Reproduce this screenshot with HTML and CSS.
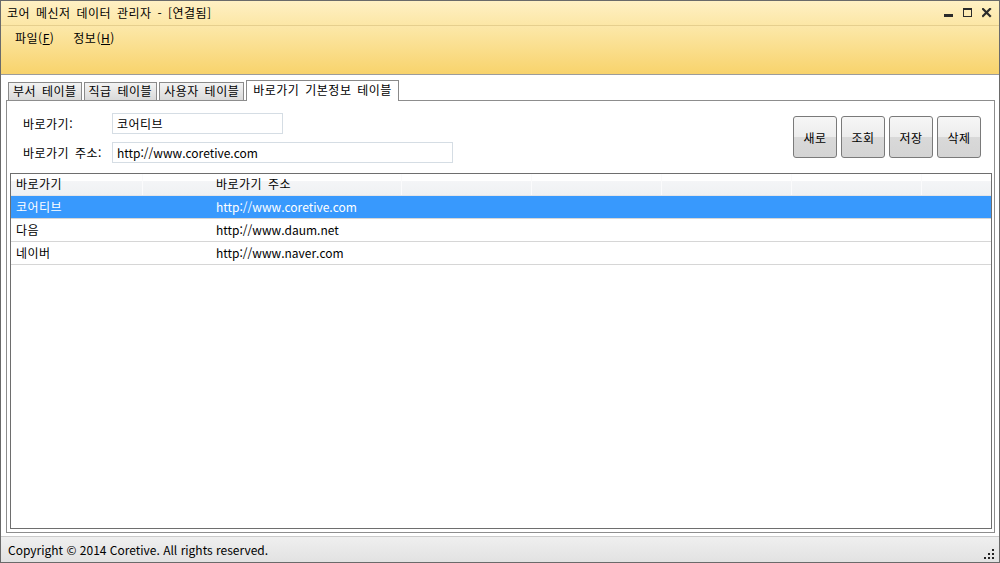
FILE: index.html
```html
<!DOCTYPE html>
<html lang="ko">
<head>
<meta charset="utf-8">
<title>코어 메신저 데이터 관리자</title>
<link rel="stylesheet" href="styles.css">
</head>
<body>
<div class="window">
  <header class="titlebar">
    <span class="title">코어 메신저 데이터 관리자 - [연결됨]</span>
    <div class="controls">
      <svg class="ctl" width="10" height="10" viewBox="0 0 10 10"><rect x="0" y="6" width="9" height="3" fill="#2b2b2b"/></svg>
      <svg class="ctl" width="10" height="10" viewBox="0 0 10 10"><rect x="0.5" y="0.5" width="8" height="8" fill="none" stroke="#2b2b2b"/><rect x="0" y="0" width="9" height="2" fill="#2b2b2b"/></svg>
      <svg class="ctl" width="10" height="10" viewBox="0 0 10 10"><path d="M1 1 L8 8 M8 1 L1 8" stroke="#2b2b2b" stroke-width="2.2" stroke-linecap="square"/></svg>
    </div>
  </header>
  <nav class="menubar">
    <span class="menu">파일(<u>F</u>)</span>
    <span class="menu">정보(<u>H</u>)</span>
  </nav>
  <main class="content">
    <div class="tabs">
      <div class="tab">부서 테이블</div>
      <div class="tab">직급 테이블</div>
      <div class="tab">사용자 테이블</div>
      <div class="tab active">바로가기 기본정보 테이블</div>
    </div>
    <section class="panel">
      <div class="form">
        <div class="fields">
          <div class="field">
            <span class="label">바로가기:</span>
            <div class="input short">코어티브</div>
          </div>
          <div class="field">
            <span class="label">바로가기 주소:</span>
            <div class="input long latin">http://www.coretive.com</div>
          </div>
        </div>
        <div class="buttons">
          <button class="btn">새로</button>
          <button class="btn">조회</button>
          <button class="btn">저장</button>
          <button class="btn">삭제</button>
        </div>
      </div>
      <div class="list">
        <div class="list-head">
          <div class="hcell c1">바로가기</div>
          <div class="hcell c2">바로가기 주소</div>
          <div class="hcell c3"></div>
          <div class="hcell c3"></div>
          <div class="hcell c3"></div>
          <div class="hcell c3"></div>
          <div class="hcell last"></div>
        </div>
        <div class="row selected"><div class="cell name">코어티브</div><div class="cell url latin">http://www.coretive.com</div></div>
        <div class="row"><div class="cell name">다음</div><div class="cell url latin">http://www.daum.net</div></div>
        <div class="row"><div class="cell name">네이버</div><div class="cell url latin">http://www.naver.com</div></div>
      </div>
    </section>
  </main>
  <footer class="status">
    <span class="copy latin">Copyright © 2014 Coretive. All rights reserved.</span>
    <svg class="grip" width="12" height="12" viewBox="0 0 12 12">
      <rect x="9" y="1" width="2" height="2" fill="#222"/>
      <rect x="5" y="5" width="2" height="2" fill="#222"/>
      <rect x="9" y="5" width="2" height="2" fill="#222"/>
      <rect x="1" y="9" width="2" height="2" fill="#222"/>
      <rect x="5" y="9" width="2" height="2" fill="#222"/>
      <rect x="9" y="9" width="2" height="2" fill="#222"/>
    </svg>
  </footer>
</div>
</body>
</html>
```
FILE: styles.css
```css
* { box-sizing: border-box; }
html, body { margin: 0; padding: 0; }
body {
  width: 1000px;
  height: 563px;
  overflow: hidden;
  font-family: "Noto Sans CJK KR", "Noto Sans", sans-serif;
  font-size: 12px;
  letter-spacing: 0.5px;
  word-spacing: 2px;
  color: #000;
  background: #fff;
}
.latin { letter-spacing: 0; word-spacing: 0; }
.window {
  width: 1000px;
  height: 563px;
  border: 1px solid #6a6a6a;
  display: flex;
  flex-direction: column;
  background: #fff;
}
.titlebar {
  height: 25px;
  flex: none;
  display: flex;
  align-items: center;
  justify-content: space-between;
  padding: 0 6px 1px 6px;
  border-bottom: 1px solid #e6cf8e;
  background: linear-gradient(#fff0c4, #fce7a6);
}
.title { line-height: 16px; }
.controls {
  display: flex;
  gap: 9px;
  align-items: center;
  padding-right: 1px;
}
.ctl { display: block; }
.menubar {
  height: 49px;
  flex: none;
  display: flex;
  align-items: flex-start;
  gap: 19px;
  padding: 4px 0 0 14px;
  border-bottom: 1px solid #9c9c9c;
  background: linear-gradient(#fce8a9, #f8d36c);
}
.menu { line-height: 16px; }
.menu u { text-underline-offset: 1px; }
.content {
  flex: 1;
  display: flex;
  flex-direction: column;
  padding: 5px 4px 3px 5px;
  background: #fff;
}
.tabs {
  height: 20px;
  flex: none;
  display: flex;
  align-items: flex-end;
  gap: 2px;
  padding-left: 2px;
}
.tab {
  height: 18px;
  padding: 0 4px;
  border: 1px solid #8a8a8a;
  border-bottom: none;
  background: linear-gradient(#f3f3f3, #d9d9d9);
  line-height: 16px;
  white-space: nowrap;
}
.tab.active {
  height: 21px;
  margin-bottom: -1px;
  padding: 0 6px;
  background: #fff;
  position: relative;
  z-index: 1;
  line-height: 17px;
}
.panel {
  flex: 1;
  display: flex;
  flex-direction: column;
  border: 1px solid #8d8d8d;
  padding: 0 2px 3px 3px;
  background: #fff;
}
.form {
  height: 72px;
  flex: none;
  display: flex;
  justify-content: space-between;
  align-items: flex-start;
}
.fields {
  display: flex;
  flex-direction: column;
  gap: 8px;
  padding: 12px 0 0 13px;
}
.field { display: flex; align-items: center; }
.label { width: 89px; line-height: 16px; }
.input {
  height: 21px;
  border: 1px solid #d5dde4;
  padding: 0 4px;
  line-height: 19px;
  background: #fff;
}
.input.short { width: 171px; }
.input.long { width: 341px; }
.buttons {
  display: flex;
  gap: 4px;
  padding-top: 15px;
  margin-right: 11px;
}
.btn {
  width: 44px;
  height: 42px;
  padding: 0;
  border: 1px solid #7a7a7a;
  border-radius: 3px;
  background: linear-gradient(#f6f6f6 0%, #ececec 50%, #d9d9d9 51%, #d4d4d4 100%);
  font-family: inherit;
  font-size: 12px;
  font-weight: 400;
  letter-spacing: 0.5px;
  color: #000;
}
.list {
  flex: 1;
  border: 1px solid #6e6e6e;
  background: #fff;
  display: flex;
  flex-direction: column;
}
.list-head {
  height: 22px;
  flex: none;
  display: flex;
  border-bottom: 1px solid #e3e5e8;
  background: linear-gradient(#ffffff 0, #ffffff 7px, #f4f5f7 7px, #eff1f3 100%);
}
.hcell {
  height: 21px;
  line-height: 20px;
  border-right: 1px solid #fbfbfc;
  white-space: nowrap;
}
.hcell.c1 { width: 132px; padding-left: 5px; }
.hcell.c2 { width: 259px; padding-left: 73px; }
.hcell.c3 { width: 130px; }
.hcell.last { flex: 1; border-right: none; }
.row {
  height: 23px;
  flex: none;
  display: flex;
  border-bottom: 1px solid #d6d6d6;
  line-height: 22px;
}
.row.selected { background: #3899fd; color: #fff; }
.cell.name { width: 200px; padding-left: 5px; }
.cell.url { padding-left: 5px; }
.status {
  height: 26px;
  flex: none;
  display: flex;
  align-items: center;
  justify-content: space-between;
  padding: 0 4px 0 7px;
  border-top: 1px solid #cacaca;
  background: linear-gradient(#efefef, #e2e2e2);
}
.copy { line-height: 16px; }
.grip { display: block; margin-top: 8px; }
```
